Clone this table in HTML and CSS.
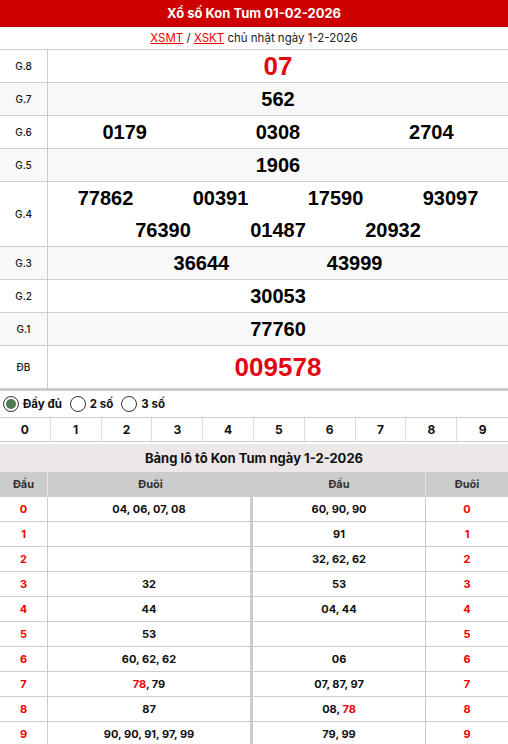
FILE: index.html
```html
<!DOCTYPE html>
<html lang="vi">
<head>
<meta charset="utf-8">
<title>Xổ số Kon Tum 01-02-2026</title>
<link rel="stylesheet" href="styles.css">
</head>
<body>
<div class="page">
  <h1 class="title">Xổ số Kon Tum 01-02-2026</h1>
  <div class="subtitle"><a href="#">XSMT</a> / <a href="#">XSKT</a> chủ nhật ngày 1-2-2026</div>

  <div class="prizes">
    <div class="row"><div class="lbl">G.8</div><div class="val"><span class="num big red">07</span></div></div>
    <div class="row alt"><div class="lbl">G.7</div><div class="val"><span class="num">562</span></div></div>
    <div class="row"><div class="lbl">G.6</div><div class="val"><span class="num w3">0179</span><span class="num w3">0308</span><span class="num w3">2704</span></div></div>
    <div class="row alt"><div class="lbl">G.5</div><div class="val"><span class="num">1906</span></div></div>
    <div class="row tall"><div class="lbl">G.4</div><div class="val wrap"><span class="num w4">77862</span><span class="num w4">00391</span><span class="num w4">17590</span><span class="num w4">93097</span><span class="num w4">76390</span><span class="num w4">01487</span><span class="num w4">20932</span></div></div>
    <div class="row alt"><div class="lbl">G.3</div><div class="val"><span class="num w3">36644</span><span class="num w3">43999</span></div></div>
    <div class="row"><div class="lbl">G.2</div><div class="val"><span class="num">30053</span></div></div>
    <div class="row alt"><div class="lbl">G.1</div><div class="val"><span class="num">77760</span></div></div>
    <div class="row db"><div class="lbl">ĐB</div><div class="val"><span class="num big red">009578</span></div></div>
  </div>

  <div class="options">
    <label class="opt"><span class="radio on"></span>Đầy đủ</label>
    <label class="opt"><span class="radio"></span>2 số</label>
    <label class="opt"><span class="radio"></span>3 số</label>
  </div>

  <div class="digits">
    <span>0</span><span>1</span><span>2</span><span>3</span><span>4</span><span>5</span><span>6</span><span>7</span><span>8</span><span>9</span>
  </div>

  <div class="loto">
    <div class="loto-title">Bảng lô tô Kon Tum ngày 1-2-2026</div>
    <div class="lrow head"><span>Đầu</span><span>Đuôi</span><span>Đầu</span><span>Đuôi</span></div>
    <div class="lrow"><span class="red">0</span><span>04, 06, 07, 08</span><span>60, 90, 90</span><span class="red">0</span></div>
    <div class="lrow"><span class="red">1</span><span></span><span>91</span><span class="red">1</span></div>
    <div class="lrow"><span class="red">2</span><span></span><span>32, 62, 62</span><span class="red">2</span></div>
    <div class="lrow"><span class="red">3</span><span>32</span><span>53</span><span class="red">3</span></div>
    <div class="lrow"><span class="red">4</span><span>44</span><span>04, 44</span><span class="red">4</span></div>
    <div class="lrow"><span class="red">5</span><span>53</span><span></span><span class="red">5</span></div>
    <div class="lrow"><span class="red">6</span><span>60, 62, 62</span><span>06</span><span class="red">6</span></div>
    <div class="lrow"><span class="red">7</span><span><em class="red">78</em>, 79</span><span>07, 87, 97</span><span class="red">7</span></div>
    <div class="lrow"><span class="red">8</span><span>87</span><span>08, <em class="red">78</em></span><span class="red">8</span></div>
    <div class="lrow"><span class="red">9</span><span>90, 90, 91, 97, 99</span><span>79, 99</span><span class="red">9</span></div>
  </div>
</div>
</body>
</html>
```

FILE: styles.css
```css
* { box-sizing: border-box; }
body {
  margin: 0;
  background: #fff;
  font-family: "Inter", "Noto Sans", sans-serif;
  color: #111;
}
.page { width: 508px; }
.title {
  margin: 0;
  height: 27px;
  line-height: 27px;
  background: #cc0000;
  color: #fff;
  font-size: 13px;
  font-weight: 700;
  text-align: center;
}
.subtitle {
  height: 22px;
  line-height: 22px;
  text-align: center;
  font-size: 11.5px;
  color: #222;
}
.subtitle a { color: #e00; text-decoration: underline; }

.prizes { border-top: 1px solid #ccc; border-bottom: 3px solid #ccc; }
.row {
  display: grid;
  grid-template-columns: 48px 1fr;
  height: 33px;
  border-bottom: 1px solid #ccc;
}
.row:last-child { border-bottom: 0; height: 42px; }
.row.alt { background: #f8f8f8; }
.row.tall { height: 65px; }
.lbl {
  border-right: 1px solid #ccc;
  display: flex;
  align-items: center;
  justify-content: center;
  font-size: 10px;
  font-weight: 500;
  color: #111;
}
.val {
  display: flex;
  align-items: center;
  justify-content: center;
}
.val.wrap { flex-wrap: wrap; align-content: center; row-gap: 8px; }
.num {
  font-family: "Liberation Sans", Arial, sans-serif;
  font-weight: 700;
  font-size: 20px;
  line-height: 24px;
  text-align: center;
  color: #000;
}
.num.w3 { width: 153.33px; }
.num.w4 { width: 115px; }
.num.big { font-size: 26px; line-height: 30px; }
.red { color: #e00 !important; }
.num.red { color: #e30613 !important; }
em { font-style: normal; }

.options {
  height: 27px;
  display: flex;
  align-items: center;
  gap: 8px;
  padding-left: 3px;
  border-bottom: 1px solid #ccc;
  font-size: 11.5px;
  font-weight: 700;
}
.opt { display: flex; align-items: center; gap: 4px; }
.radio {
  width: 16px; height: 16px;
  border: 1px solid #333;
  border-radius: 50%;
  display: inline-flex;
  align-items: center;
  justify-content: center;
  background: #fff;
}
.radio.on::after {
  content: "";
  width: 10px; height: 10px;
  border-radius: 50%;
  background: #4b7d4e;
}
.digits {
  display: grid;
  grid-template-columns: repeat(10, 1fr);
  height: 24px;
  border-bottom: 1px solid #ccc;
}
.digits span {
  line-height: 23px;
  text-align: center;
  font-size: 12px;
  font-weight: 700;
  border-right: 1px solid #ddd;
}
.digits span:last-child { border-right: 0; }

.loto { margin-top: 2px; }
.loto-title {
  height: 28px;
  line-height: 28px;
  text-align: center;
  background: #ebe8e7;
  font-size: 13px;
  font-weight: 700;
}
.lrow {
  display: grid;
  grid-template-columns: 48px 205px 173px 1fr;
  height: 25px;
  border-bottom: 1px solid #ccc;
}
.lrow span {
  line-height: 24px;
  text-align: center;
  font-size: 11px;
  font-weight: 700;
  border-right: 1px solid #ccc;
  white-space: nowrap;
}
.lrow span:nth-child(2) { border-right: 3px solid #ccc; }
.lrow span:last-child { border-right: 0; }
.lrow.head { background: #ccc; border-bottom: 0; }
.lrow.head span { border-right: 1px solid #e6e6e6; color: #333; line-height: 25px; }
.lrow.head span:nth-child(2) { border-right: 0; }
.lrow.head span:last-child { border-right: 0; }
```
